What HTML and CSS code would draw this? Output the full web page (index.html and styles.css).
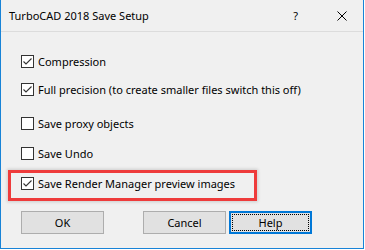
FILE: index.html
```html
<!DOCTYPE html>
<html lang="en">
<head>
    <meta charset="UTF-8">
    <title>TurboCAD 2018 Save Setup</title>
    <link rel="stylesheet" href="styles.css">
</head>
<body>
    <div class="window">
        <div class="titlebar">
            <span class="title">TurboCAD 2018 Save Setup</span>
            <span class="help-q">?</span>
            <svg class="close" width="10" height="10" viewBox="0 0 10 10">
                <path d="M0.5 0.5 L9.5 9.5 M9.5 0.5 L0.5 9.5" stroke="#000" stroke-width="1" fill="none"/>
            </svg>
        </div>
        <div class="content">
            <label class="row row-1">
                <span class="box"><svg width="11" height="11" viewBox="0 0 11 11"><path d="M1.5 5.5 L4 8 L9.5 2.5" stroke="#333" stroke-width="1.1" fill="none"/></svg></span>
                Compression
            </label>
            <label class="row row-2">
                <span class="box"><svg width="11" height="11" viewBox="0 0 11 11"><path d="M1.5 5.5 L4 8 L9.5 2.5" stroke="#333" stroke-width="1.1" fill="none"/></svg></span>
                Full precision (to create smaller files switch this off)
            </label>
            <label class="row row-3">
                <span class="box"></span>
                Save proxy objects
            </label>
            <label class="row row-4">
                <span class="box"></span>
                Save Undo
            </label>
            <div class="highlight">
                <label class="row">
                    <span class="box"><svg width="11" height="11" viewBox="0 0 11 11"><path d="M1.5 5.5 L4 8 L9.5 2.5" stroke="#333" stroke-width="1.1" fill="none"/></svg></span>
                    Save Render Manager preview images
                </label>
            </div>
            <div class="buttons">
                <button class="btn btn-ok">OK</button>
                <button class="btn btn-cancel">Cancel</button>
                <button class="btn btn-default"><span class="focus">Help</span></button>
            </div>
        </div>
    </div>
</body>
</html>
```

FILE: styles.css
```css
body {
    margin: 0;
    padding: 0;
    background-color: #fff;
    font-family: "Noto Sans", Arial, sans-serif;
    font-size: 11px;
    color: #000;
}
.window {
    width: 362px;
    height: 248px;
    background-color: #f0f0f0;
    border-left: 1px solid #1883d7;
    border-right: 1px solid #1883d7;
    border-bottom: 1px solid #1883d7;
}
.titlebar {
    display: flex;
    align-items: center;
    height: 31px;
    border-bottom: 1px solid #dcdcdc;
}
.title {
    margin-left: 8px;
    flex: 1;
}
.help-q {
    margin-right: 39px;
}
.close {
    margin-right: 16px;
}
.content {
    display: flex;
    flex-direction: column;
    align-items: flex-start;
}
.row {
    display: flex;
    align-items: center;
    height: 13px;
    line-height: 13px;
    margin-left: 20px;
    white-space: nowrap;
}
.row-1 {
    margin-top: 23px;
}
.row-2 {
    margin-top: 15px;
}
.row-3 {
    margin-top: 21px;
}
.row-4 {
    margin-top: 17px;
}
.box {
    display: flex;
    width: 11px;
    height: 11px;
    border: 1px solid #333;
    background-color: #fff;
    margin-right: 4px;
}
.highlight {
    margin-top: 10px;
    margin-left: 7px;
    width: 233px;
    padding: 4px 0 8px 10px;
    border: 3px solid #ee3b3b;
    box-shadow: 0 0 3px 1px rgba(0, 0, 0, 0.15);
}
.highlight .row {
    margin-left: 0;
}
.buttons {
    display: flex;
    margin-top: 10px;
    margin-left: 20px;
}
.btn {
    width: 83px;
    height: 23px;
    padding: 0;
    font-family: inherit;
    font-size: 11px;
    color: #000;
    background-color: #e1e1e1;
    border: 1px solid #adadad;
}
.btn-ok {
    margin-right: 39px;
}
.btn-cancel {
    margin-right: 3px;
}
.btn-default {
    border: 2px solid #0078d7;
    padding: 1px;
}
.btn-default .focus {
    display: block;
    height: 15px;
    line-height: 15px;
    border: 1px dotted #000;
}
```
